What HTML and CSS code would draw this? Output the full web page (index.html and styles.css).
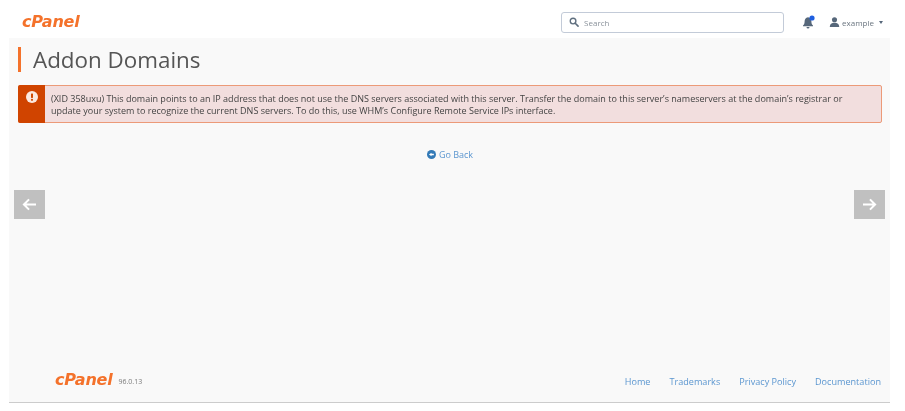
FILE: index.html
```html
<!DOCTYPE html>
<html lang="en">
<head>
<meta charset="utf-8">
<title>Addon Domains</title>
<link rel="stylesheet" href="styles.css">
</head>
<body>
<div class="app">
  <header class="topbar">
    <span class="logo">cPanel</span>
    <div class="tools">
      <label class="search">
        <svg class="search-icon" viewBox="0 0 16 16"><circle cx="6.5" cy="6.5" r="4.5" fill="none" stroke="#5f6f7f" stroke-width="2.2"/><path d="M10 10l4.500 4.500" stroke="#5f6f7f" stroke-width="2.600" stroke-linecap="round"/></svg>
        <span class="search-text">Search</span>
      </label>
      <span class="bell">
        <svg viewBox="0 0 14 14" width="14" height="14"><path d="M6 2.200c-2.400.3-3.400 2-3.400 4.200 0 2-.5 3-1.600 4.100v.8h10v-.8c-1.100-1.100-1.600-2.100-1.600-4.100C9.400 4.200 8.400 2.500 6 2.200z" fill="#56677a"/><path d="M4.500 12h3a1.500 1.500 0 0 1-3 0z" fill="#56677a"/><circle cx="10" cy="3" r="2.600" fill="#1f5fe0"/></svg>
      </span>
      <span class="user">
        <svg viewBox="0 0 12 11" width="11" height="10"><circle cx="6" cy="3" r="2.800" fill="#56677a"/><path d="M.8 11c0-3.300 2-4.600 5.200-4.600s5.200 1.300 5.200 4.600z" fill="#56677a"/></svg>
        <span class="user-name">example</span>
        <i class="caret"></i>
      </span>
    </div>
  </header>
  <main class="content">
    <h1 class="title">Addon Domains</h1>
    <div class="alert">
      <div class="alert-side">
        <svg viewBox="0 0 12 12" width="12" height="12"><circle cx="6" cy="6" r="6" fill="#fbe9e0"/><rect x="5" y="2.400" width="2" height="4.500" rx=".6" fill="#d04a02"/><circle cx="6" cy="8.800" r="1.100" fill="#d04a02"/></svg>
      </div>
      <p class="alert-text">(XID 358uxu) This domain points to an IP address that does not use the DNS servers associated with this server. Transfer the domain to this server’s nameservers at the domain’s registrar or update your system to recognize the current DNS servers. To do this, use WHM’s Configure Remote Service IPs interface.</p>
    </div>
    <div class="back-row">
      <a class="back">
        <svg viewBox="0 0 10 10" width="9" height="9"><circle cx="5" cy="5" r="5" fill="#337ab7"/><path d="M2.200 5L5 3v1.200h2.600v1.600H5V7z" fill="#fff"/></svg>
        Go Back
      </a>
    </div>
    <footer class="footer">
      <div class="footer-brand">
        <span class="logo">cPanel</span>
        <span class="version">96.0.13</span>
      </div>
      <nav class="footer-links">
        <a>Home</a>
        <a>Trademarks</a>
        <a>Privacy Policy</a>
        <a>Documentation</a>
      </nav>
    </footer>
  </main>
  <div class="nav-arrow nav-prev">
    <svg viewBox="0 0 16 14" width="15" height="13"><path d="M15 7H2M7.500 1.500L2 7l5.500 5.500" fill="none" stroke="#fff" stroke-width="2.200"/></svg>
  </div>
  <div class="nav-arrow nav-next">
    <svg viewBox="0 0 16 14" width="15" height="13"><path d="M1 7h13M8.500 1.500L14 7l-5.500 5.500" fill="none" stroke="#fff" stroke-width="2.200"/></svg>
  </div>
</div>
</body>
</html>
```
FILE: styles.css
```css
* { box-sizing: border-box; }
html, body { margin: 0; height: 100%; background: #fff; overflow: hidden; }
body { font-family: "Open Sans", "Liberation Sans", sans-serif; color: #444; }
.app { position: relative; width: 881px; height: 403px; margin-left: 9px; display: flex; flex-direction: column; filter: blur(.4px); }
.topbar { height: 38px; flex: none; display: flex; align-items: center; justify-content: space-between; padding: 6px 7px 0 13px; background: #fff; }
.logo { font-family: "DejaVu Sans", sans-serif; font-weight: 700; font-style: italic; font-size: 16px; line-height: 1; letter-spacing: -.2px; color: #f4722b; }
.tools { display: flex; align-items: center; }
.search { width: 223px; height: 21px; margin-right: 18px; display: flex; align-items: center; padding-left: 7px; background: #fff; border: 1px solid #c3cbd8; border-radius: 3px; }
.search-icon { width: 10px; height: 10px; margin-right: 5px; }
.search-text { font-size: 8px; color: #8a929b; }
.bell { width: 14px; height: 14px; display: flex; margin-right: 13px; }
.user { display: flex; align-items: center; gap: 2px; font-size: 8px; color: #6b7680; }
.caret { width: 0; height: 0; margin-left: 3px; border-top: 3px solid #56677a; border-left: 2.500px solid transparent; border-right: 2.500px solid transparent; }
.content { flex: 1; display: flex; flex-direction: column; background: #f9f9f9; border-bottom: 1px solid #ccc; padding: 9px 8px 0 9px; }
.title { margin: 0; height: 25px; padding-left: 12px; border-left: 3px solid #f4722b; font-size: 22.400px; font-weight: 400; line-height: 26px; color: #555; }
.alert { display: flex; height: 38px; margin-top: 13px; background: #f2dede; border: 1px solid #ec9a78; border-radius: 2px; }
.alert-side { width: 27px; flex: none; display: flex; justify-content: center; padding-top: 6px; background: #d04400; margin: -1px 0 -1px -1px; border-radius: 2px 0 0 2px; }
.alert-text { margin: 0; padding: 7px 28px 0 6px; font-size: 9.030px; line-height: 12px; color: #444; }
.back-row { margin-top: 25px; display: flex; justify-content: center; }
.back { display: flex; align-items: center; gap: 3px; font-size: 9px; line-height: 13px; color: #5b96d0; }
.footer { margin-top: auto; height: 30px; display: flex; align-items: flex-start; justify-content: space-between; padding: 0 1px 0 37px; }
.footer-brand { display: flex; align-items: center; gap: 6px; }
.version { font-size: 7px; color: #7a7a7a; padding-top: 2px; }
.footer-links { display: flex; gap: 19px; font-size: 9.100px; line-height: 14px; color: #5b96d0; padding-top: 3px; }
.nav-arrow { position: absolute; top: 190px; width: 31px; height: 29px; display: flex; align-items: center; justify-content: center; background: #c0c0c0; }
.nav-prev { left: 5px; }
.nav-next { left: 845px; }
```
